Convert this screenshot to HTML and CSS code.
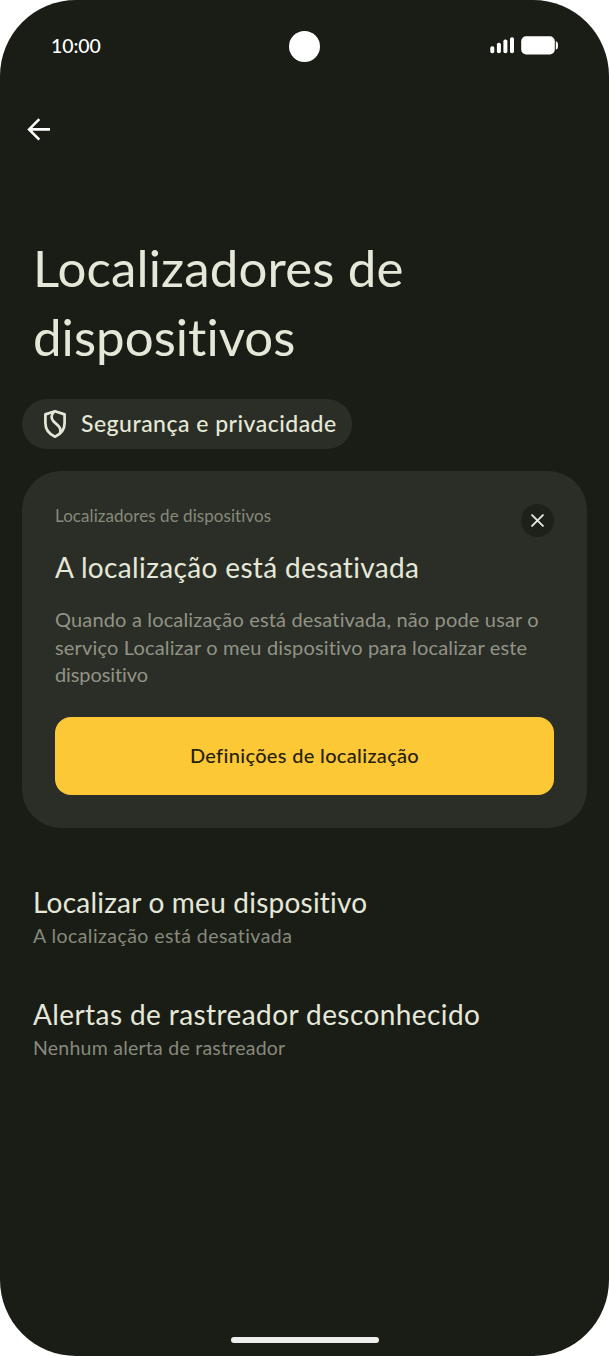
FILE: index.html
```html
<!DOCTYPE html>
<html lang="pt">
<head>
<meta charset="utf-8">
<title>Localizadores de dispositivos</title>
<link rel="stylesheet" href="styles.css">
</head>
<body>
<main class="phone">
  <header class="status">
    <span class="time">10:00</span>
    <span class="camera"></span>
    <svg class="indicators" width="68" height="20" viewBox="0 0 68 20" fill="#fff">
      <rect x="0.3" y="10.3" width="4" height="7" rx="1.8"/>
      <rect x="6.9" y="6.8" width="4" height="10.5" rx="1.8"/>
      <rect x="13.4" y="3.5" width="4" height="13.8" rx="1.8"/>
      <rect x="20" y="1.2" width="4" height="16.1" rx="1.8"/>
      <rect x="31.2" y="0.3" width="33.6" height="18.2" rx="5"/>
      <path d="M65.8 5.2c1.7.5 2.2 1.5 2.2 4.2s-.5 3.7-2.2 4.2z"/>
    </svg>
  </header>
  <nav class="toolbar">
    <svg width="24" height="24" viewBox="0 0 24 24" fill="none" stroke="#fff" stroke-width="2.6"><path d="M23 12.4H2.5M12.3 2.2L2.1 12.4l10.2 10.2"/></svg>
  </nav>
  <h1 class="title"><span class="title-first">Localizadores de</span><br><span class="title-second">dispositivos</span></h1>
  <div class="chip">
    <svg width="24" height="30" viewBox="0 0 24 30" fill="none" stroke="#e5e8d8" stroke-width="2.7" stroke-linejoin="round"><path d="M12 2.2L21.6 5.4V14C21.6 20.2 18 25 12 27.7C6 25 2.4 20.2 2.4 14V5.4Z"/><path d="M11.2 2.6C8.2 5.6 7.6 9.4 10.4 12.2L15.2 16.8C17.6 19.1 18 21 17 24"/></svg>
    <span class="chip-label">Segurança e privacidade</span>
  </div>
  <section class="card">
    <div class="card-head">
      <span class="eyebrow">Localizadores de dispositivos</span>
      <span class="close"><svg width="13" height="13" viewBox="0 0 13 13" stroke="#e5e8d8" stroke-width="1.9" stroke-linecap="round"><path d="M1.1 1.1l10.8 10.8M11.9 1.1L1.1 11.9"/></svg></span>
    </div>
    <h2 class="card-title">A localização está desativada</h2>
    <p class="card-text">Quando a localização está desativada, não pode usar o<br>serviço Localizar o meu dispositivo para localizar este<br><span class="card-text-end">dispositivo</span></p>
    <div class="button"><span class="button-label">Definições de localização</span></div>
  </section>
  <section class="list">
    <div class="item"><h3 class="item-title item-find">Localizar o meu dispositivo</h3><p class="item-sub item-off">A localização está desativada</p></div>
    <div class="item"><h3 class="item-title item-alerts">Alertas de rastreador desconhecido</h3><p class="item-sub item-none">Nenhum alerta de rastreador</p></div>
  </section>
  <div class="home"></div>
</main>
</body>
</html>
```
FILE: styles.css
```css
* { box-sizing: border-box; }
body { margin: 0; background: #fff; font-family: Lato, sans-serif; font-variant-ligatures: none; }
h1, h2, h3, p { margin: 0; font-weight: 400; white-space: nowrap; }
svg { display: block; }
.phone { width: 609px; height: 1356px; border-radius: 76px; background: #1a1d16; color: #e5e8d8; display: flex; flex-direction: column; overflow: hidden; }
.status { display: grid; grid-template-columns: 1fr 32px 1fr; align-items: center; height: 92px; padding: 0 51px; color: #fff; }
.time { font-size: 19.5px; font-weight: 500; letter-spacing: -0.1px; padding-bottom: 1px; }
.camera { width: 31px; height: 31px; border-radius: 50%; background: #fff; }
.indicators { justify-self: end; }
.toolbar { height: 76px; padding: 25px 27px; }
.title { margin-top: 65px; padding-left: 33px; font-size: 51px; line-height: 69px; }
.title-first { letter-spacing: 0.15px; }
.title-second { letter-spacing: 0.05px; }
.chip { margin: 28px 0 0 22px; width: 330px; height: 50px; border-radius: 25px; background: #2b2e26; display: flex; align-items: center; padding-left: 21px; gap: 14px; }
.chip-label { font-size: 23px; font-weight: 500; letter-spacing: 0.48px; white-space: nowrap; padding-bottom: 2px; }
.card { margin: 22px 22px 0; height: 357px; border-radius: 39px; background: #2b2e26; padding: 33px; }
.card-head { display: flex; justify-content: space-between; height: 45px; }
.eyebrow { font-size: 17px; line-height: 24px; letter-spacing: 0.06px; color: #87897c; }
.close { width: 33px; height: 33px; margin-right: 0.5px; border-radius: 50%; background: #1e201a; display: grid; place-items: center; }
.card-title { font-size: 28px; line-height: 36px; letter-spacing: 0.36px; }
.card-text { margin-top: 21px; font-size: 20px; line-height: 27.5px; letter-spacing: 0.16px; color: #919386; }
.card-text-end { letter-spacing: -0.1px; }
.button { margin-top: 28px; height: 78px; border-radius: 16px; background: #fdc835; color: #26210f; display: grid; place-items: center; }
.button-label { font-size: 20px; font-weight: 500; letter-spacing: 0.33px; padding-bottom: 2px; }
.list { padding: 56px 33px 0; display: grid; gap: 46px; }
.item-title { font-size: 28px; line-height: 36px; }
.item-find { letter-spacing: 0.22px; }
.item-alerts { letter-spacing: 0.41px; }
.item-sub { margin-top: 2px; font-size: 19.5px; line-height: 28px; color: #87897c; }
.item-off { letter-spacing: 0.44px; }
.item-none { letter-spacing: 0.24px; }
.home { width: 148px; height: 6px; border-radius: 3px; background: #eeeeec; margin: auto auto 13px; }
```
